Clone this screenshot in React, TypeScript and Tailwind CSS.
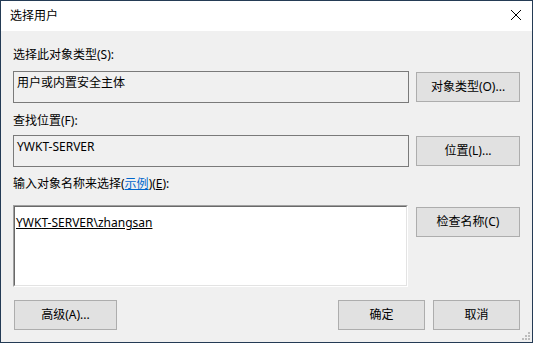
import React from 'react';

const font = { fontFamily: '"Noto Sans", "Noto Sans CJK SC", sans-serif' };

function WinButton({ children, className = '' }: { children: React.ReactNode; className?: string }) {
  return (
    <button
      type="button"
      className={`h-[30px] border border-[#adadad] bg-[#e1e1e1] text-[12px] leading-none text-black ${className}`}
    >
      {children}
    </button>
  );
}

function ReadonlyBox({ value }: { value: string }) {
  return (
    <div className="h-[32px] w-[396px] border border-[#7a7a7a] bg-[#f0f0f0] pl-[3px] pt-[3px] text-[12px] leading-[16px] text-black">
      {value}
    </div>
  );
}

export default function App() {
  return (
    <div
      className="flex h-[343px] w-[533px] flex-col border border-[#243b55] bg-[#f0f0f0] text-black"
      style={font}
    >
      {/* title bar */}
      <div className="flex h-[30px] shrink-0 items-center justify-between bg-white pl-[9px] pr-[10px]">
        <span className="text-[12px] leading-none">选择用户</span>
        <svg width="12" height="12" viewBox="0 0 12 12" className="mb-[2px]">
          <path d="M1 1 L11 11 M11 1 L1 11" stroke="#000" strokeWidth="1" fill="none" />
        </svg>
      </div>

      <div className="relative flex flex-1 flex-col pl-[12px] pr-[12px]">
        <div className="mt-[16px] text-[12px] leading-[16px]">选择此对象类型(S):</div>
        <div className="mt-[8px] flex items-center gap-[7px]">
          <ReadonlyBox value="用户或内置安全主体" />
          <WinButton className="w-[104px]">对象类型(O)...</WinButton>
        </div>

        <div className="mt-[10px] text-[12px] leading-[16px]">查找位置(F):</div>
        <div className="mt-[6px] flex items-center gap-[7px]">
          <ReadonlyBox value="YWKT-SERVER" />
          <WinButton className="w-[104px]">位置(L)...</WinButton>
        </div>

        <div className="mt-[9px] text-[12px] leading-[16px]">
          输入对象名称来选择(
          <span className="text-[#0066cc] underline">示例</span>)(<span className="underline">E</span>):
        </div>
        <div className="mt-[13px] flex items-start gap-[8px]">
          <div className="h-[82px] w-[395px] border-t border-l border-r border-b border-t-[#a0a0a0] border-l-[#a0a0a0] border-r-white border-b-white">
            <div className="h-full w-full border-t border-l border-r border-b border-t-[#696969] border-l-[#696969] border-r-[#e3e3e3] border-b-[#e3e3e3] bg-white pl-[1px] pt-[8px] text-[12px] leading-[16px]">
              <span className="underline">YWKT-SERVER\zhangsan</span>
            </div>
          </div>
          <WinButton className="mt-[2px] w-[104px]">检查名称(C)</WinButton>
        </div>

        <div className="mt-[13px] flex items-center">
          <WinButton className="ml-[1px] w-[103px]">高级(A)...</WinButton>
          <div className="flex-1" />
          <WinButton className="w-[87px]">确定</WinButton>
          <WinButton className="ml-[8px] w-[87px]">取消</WinButton>
        </div>

        <svg width="10" height="10" viewBox="0 0 10 10" className="absolute bottom-[1px] right-[1px]">
          <g fill="#bcbcbc">
            <rect x="7" y="1" width="2" height="2" />
            <rect x="4" y="4" width="2" height="2" />
            <rect x="7" y="4" width="2" height="2" />
            <rect x="1" y="7" width="2" height="2" />
            <rect x="4" y="7" width="2" height="2" />
            <rect x="7" y="7" width="2" height="2" />
          </g>
        </svg>
      </div>
    </div>
  );
}
